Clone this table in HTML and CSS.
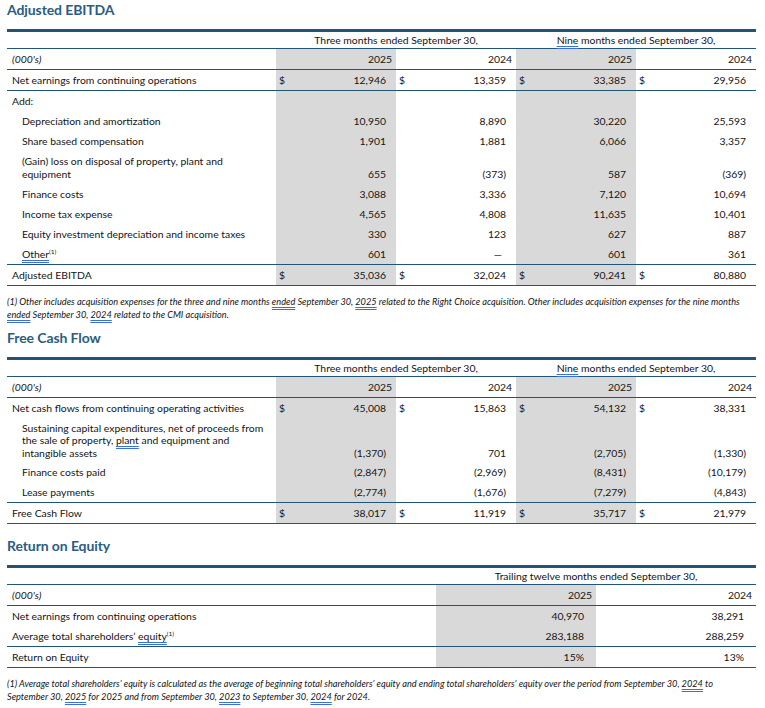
FILE: index.html
```html
<!DOCTYPE html>
<html lang="en">
<head>
<meta charset="utf-8">
<title>Non-GAAP measures</title>
<link rel="stylesheet" href="styles.css">
</head>
<body>
<section class="block">
  <h2 class="title">Adjusted EBITDA</h2>
  <table class="fin">
    <colgroup>
      <col class="c-label">
      <col class="c-sym"><col class="c-val">
      <col class="c-sym"><col class="c-val">
      <col class="c-sym"><col class="c-val">
      <col class="c-sym"><col class="c-val">
    </colgroup>
    <thead>
      <tr class="period">
        <th></th>
        <th colspan="4">Three months ended September 30,</th>
        <th colspan="4"><span class="sq">Nine</span> months ended September 30,</th>
      </tr>
      <tr class="years">
        <th class="unit">(000's)</th>
        <th colspan="2" class="g">2025</th>
        <th colspan="2">2024</th>
        <th colspan="2" class="g">2025</th>
        <th colspan="2">2024</th>
      </tr>
    </thead>
    <tbody>
      <tr class="sep">
        <td class="lbl">Net earnings from continuing operations</td>
        <td class="sym g">$</td><td class="val g">12,946</td>
        <td class="sym">$</td><td class="val">13,359</td>
        <td class="sym g">$</td><td class="val g">33,385</td>
        <td class="sym">$</td><td class="val">29,956</td>
      </tr>
      <tr>
        <td class="lbl">Add:</td>
        <td class="sym g"></td><td class="val g"></td>
        <td class="sym"></td><td class="val"></td>
        <td class="sym g"></td><td class="val g"></td>
        <td class="sym"></td><td class="val"></td>
      </tr>
      <tr>
        <td class="lbl ind">Depreciation and amortization</td>
        <td class="sym g"></td><td class="val g">10,950</td>
        <td class="sym"></td><td class="val">8,890</td>
        <td class="sym g"></td><td class="val g">30,220</td>
        <td class="sym"></td><td class="val">25,593</td>
      </tr>
      <tr>
        <td class="lbl ind">Share based compensation</td>
        <td class="sym g"></td><td class="val g">1,901</td>
        <td class="sym"></td><td class="val">1,881</td>
        <td class="sym g"></td><td class="val g">6,066</td>
        <td class="sym"></td><td class="val">3,357</td>
      </tr>
      <tr>
        <td class="lbl ind">(Gain) loss on disposal of property, plant and<br>equipment</td>
        <td class="sym g"></td><td class="val g">655</td>
        <td class="sym"></td><td class="val">(373)</td>
        <td class="sym g"></td><td class="val g">587</td>
        <td class="sym"></td><td class="val">(369)</td>
      </tr>
      <tr>
        <td class="lbl ind">Finance costs</td>
        <td class="sym g"></td><td class="val g">3,088</td>
        <td class="sym"></td><td class="val">3,336</td>
        <td class="sym g"></td><td class="val g">7,120</td>
        <td class="sym"></td><td class="val">10,694</td>
      </tr>
      <tr>
        <td class="lbl ind">Income tax expense</td>
        <td class="sym g"></td><td class="val g">4,565</td>
        <td class="sym"></td><td class="val">4,808</td>
        <td class="sym g"></td><td class="val g">11,635</td>
        <td class="sym"></td><td class="val">10,401</td>
      </tr>
      <tr>
        <td class="lbl ind">Equity investment depreciation and income taxes</td>
        <td class="sym g"></td><td class="val g">330</td>
        <td class="sym"></td><td class="val">123</td>
        <td class="sym g"></td><td class="val g">627</td>
        <td class="sym"></td><td class="val">887</td>
      </tr>
      <tr class="sep">
        <td class="lbl ind"><span class="sq">Other</span><sup>(1)</sup></td>
        <td class="sym g"></td><td class="val g">601</td>
        <td class="sym"></td><td class="val dash">—</td>
        <td class="sym g"></td><td class="val g">601</td>
        <td class="sym"></td><td class="val">361</td>
      </tr>
      <tr class="sep">
        <td class="lbl">Adjusted EBITDA</td>
        <td class="sym g">$</td><td class="val g">35,036</td>
        <td class="sym">$</td><td class="val">32,024</td>
        <td class="sym g">$</td><td class="val g">90,241</td>
        <td class="sym">$</td><td class="val">80,880</td>
      </tr>
    </tbody>
  </table>
  <p class="note">(1) Other includes acquisition expenses for the three and nine months <span class="sq">ended</span> September 30, <span class="sq">2025</span> related to the Right Choice acquisition. Other includes acquisition expenses for the nine months<br><span class="sq">ended</span> September 30, <span class="sq">2024</span> related to the CMI acquisition.</p>
</section>

<section class="block">
  <h2 class="title">Free Cash Flow</h2>
  <table class="fin">
    <colgroup>
      <col class="c-label">
      <col class="c-sym"><col class="c-val">
      <col class="c-sym"><col class="c-val">
      <col class="c-sym"><col class="c-val">
      <col class="c-sym"><col class="c-val">
    </colgroup>
    <thead>
      <tr class="period">
        <th></th>
        <th colspan="4">Three months ended September 30,</th>
        <th colspan="4"><span class="sq">Nine</span> months ended September 30,</th>
      </tr>
      <tr class="years">
        <th class="unit">(000's)</th>
        <th colspan="2" class="g">2025</th>
        <th colspan="2">2024</th>
        <th colspan="2" class="g">2025</th>
        <th colspan="2">2024</th>
      </tr>
    </thead>
    <tbody>
      <tr>
        <td class="lbl">Net cash flows from continuing operating activities</td>
        <td class="sym g">$</td><td class="val g">45,008</td>
        <td class="sym">$</td><td class="val">15,863</td>
        <td class="sym g">$</td><td class="val g">54,132</td>
        <td class="sym">$</td><td class="val">38,331</td>
      </tr>
      <tr class="tight">
        <td class="lbl ind">Sustaining capital expenditures, net of proceeds from<br>the sale of property, <span class="sq">plant</span> and equipment and<br>intangible assets</td>
        <td class="sym g"></td><td class="val g">(1,370)</td>
        <td class="sym"></td><td class="val">701</td>
        <td class="sym g"></td><td class="val g">(2,705)</td>
        <td class="sym"></td><td class="val">(1,330)</td>
      </tr>
      <tr>
        <td class="lbl ind">Finance costs paid</td>
        <td class="sym g"></td><td class="val g">(2,847)</td>
        <td class="sym"></td><td class="val">(2,969)</td>
        <td class="sym g"></td><td class="val g">(8,431)</td>
        <td class="sym"></td><td class="val">(10,179)</td>
      </tr>
      <tr class="sep">
        <td class="lbl ind">Lease payments</td>
        <td class="sym g"></td><td class="val g">(2,774)</td>
        <td class="sym"></td><td class="val">(1,676)</td>
        <td class="sym g"></td><td class="val g">(7,279)</td>
        <td class="sym"></td><td class="val">(4,843)</td>
      </tr>
      <tr class="sep">
        <td class="lbl">Free Cash Flow</td>
        <td class="sym g">$</td><td class="val g">38,017</td>
        <td class="sym">$</td><td class="val">11,919</td>
        <td class="sym g">$</td><td class="val g">35,717</td>
        <td class="sym">$</td><td class="val">21,979</td>
      </tr>
    </tbody>
  </table>
</section>

<section class="block">
  <h2 class="title title-roe">Return on Equity</h2>
  <table class="fin roe">
    <colgroup>
      <col class="c-label-wide">
      <col class="c-wide"><col class="c-wide">
    </colgroup>
    <thead>
      <tr class="period">
        <th></th>
        <th colspan="2">Trailing twelve months ended September 30,</th>
      </tr>
      <tr class="years">
        <th class="unit">(000's)</th>
        <th class="g">2025</th>
        <th>2024</th>
      </tr>
    </thead>
    <tbody>
      <tr>
        <td class="lbl">Net earnings from continuing operations</td>
        <td class="val g">40,970</td>
        <td class="val">38,291</td>
      </tr>
      <tr class="sep">
        <td class="lbl">Average total shareholders’ <span class="sq">equity</span><sup>(1)</sup></td>
        <td class="val g">283,188</td>
        <td class="val">288,259</td>
      </tr>
      <tr class="sep">
        <td class="lbl">Return on Equity</td>
        <td class="val g">15%</td>
        <td class="val">13%</td>
      </tr>
    </tbody>
  </table>
  <p class="note note-roe">(1) Average total shareholders’ equity is calculated as the average of beginning total shareholders’ equity and ending total shareholders’ equity over the period from September 30, <span class="sq">2024</span> to<br>September 30, <span class="sq">2025</span> for 2025 and from September 30, <span class="sq">2023</span> to September 30, <span class="sq">2024</span> for 2024.</p>
</section>
</body>
</html>
```

FILE: styles.css
```css
html, body {
  margin: 0;
  padding: 0;
  background: #ffffff;
}

body {
  padding: 0 10px 0 7px;
  font-family: Lato, "Liberation Sans", sans-serif;
  font-size: 10.4px;
  color: #141414;
}

.title {
  margin: 1px 0 10px 0;
  font-size: 14px;
  line-height: 18px;
  font-weight: 700;
  letter-spacing: -0.1px;
  color: #2a5d80;
}

.block + .block .title {
  margin-top: 5px;
}

.title-roe {
  margin-top: 13px !important;
}

.fin {
  width: 748px;
  border-collapse: collapse;
  table-layout: fixed;
  border-top: 3px solid #215575;
}

.c-label { width: 269px; }
.c-sym { width: 20px; }
.c-val { width: 100px; }
.c-label-wide { width: 429px; }
.c-wide { width: 160px; }

.fin th,
.fin td {
  padding: 4px 0 3px 0;
  line-height: 13px;
  font-weight: 400;
  vertical-align: bottom;
  white-space: nowrap;
}

.fin .tight td {
  line-height: 12.4px;
}

.period th {
  padding: 2px 0 1px 0;
  text-align: center;
  border-bottom: 1px solid #215575;
}

.years th {
  text-align: right;
  padding-right: 4px;
  border-bottom: 1px solid #215575;
}

.years th.unit {
  text-align: left;
  padding-left: 5px;
  font-style: italic;
}

.sep td {
  border-bottom: 1px solid #215575;
}

.lbl {
  padding-left: 5px !important;
  text-align: left;
}

.lbl.ind {
  padding-left: 15px !important;
}

.sym {
  padding-left: 3px !important;
  text-align: left;
}

.val {
  text-align: right;
  padding-right: 10px !important;
}

.roe .val {
  padding-right: 12px !important;
}

.dash {
  padding-right: 14px !important;
}

.g {
  background: #d9d9d9;
}

sup {
  font-size: 6.5px;
  line-height: 0;
  vertical-align: 4px;
}

.sq {
  text-decoration: underline double #3d6fd8;
  text-decoration-thickness: 1px;
  text-underline-offset: 1.5px;
}

.note {
  margin: 9px 0 8px 0;
  font-size: 9.2px;
  line-height: 13px;
  font-style: italic;
  white-space: nowrap;
  color: #141414;
}

.note-roe {
  margin-top: 10px;
  line-height: 12.5px;
}
```
